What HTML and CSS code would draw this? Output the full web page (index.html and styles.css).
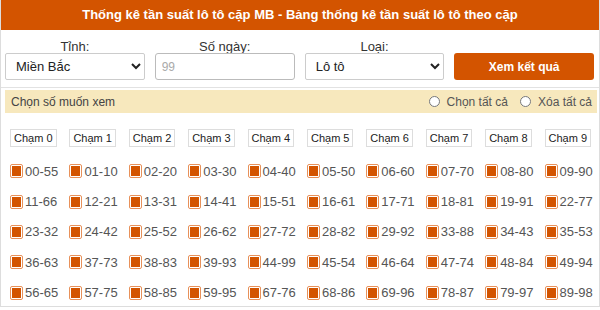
FILE: index.html
```html
<!DOCTYPE html>
<html lang="vi">
<head>
    <meta charset="UTF-8">
    <title>Thống kê tần suất lô tô cặp MB</title>
    <link rel="stylesheet" href="styles.css">
</head>
<body>
    <div class="box">
        <h2 class="box-title">Thống kê tần suất lô tô cặp MB - Bảng thống kê tần suất lô tô theo cặp</h2>
        <form class="filter">
            <div class="field">
                <label for="province">Tỉnh:</label>
                <select id="province"><option>Miền Bắc</option></select>
            </div>
            <div class="field">
                <label for="days">Số ngày:</label>
                <input type="number" id="days" placeholder="99">
            </div>
            <div class="field">
                <label for="type">Loại:</label>
                <select id="type"><option>Lô tô</option></select>
            </div>
            <div class="field">
                <label>&nbsp;</label>
                <button type="button">Xem kết quả</button>
            </div>
        </form>
        <div class="pick">
            <div class="pick-head">
                <span>Chọn số muốn xem</span>
                <div class="pick-opts">
                    <label><input type="radio" name="all"> Chọn tất cả</label>
                    <label><input type="radio" name="all"> Xóa tất cả</label>
                </div>
            </div>
            <div class="grid" id="grid"></div>
        </div>
    </div>

    <script>
        const pairs = [
            ['00-55', '01-10', '02-20', '03-30', '04-40', '05-50', '06-60', '07-70', '08-80', '09-90'],
            ['11-66', '12-21', '13-31', '14-41', '15-51', '16-61', '17-71', '18-81', '19-91', '22-77'],
            ['23-32', '24-42', '25-52', '26-62', '27-72', '28-82', '29-92', '33-88', '34-43', '35-53'],
            ['36-63', '37-73', '38-83', '39-93', '44-99', '45-54', '46-64', '47-74', '48-84', '49-94'],
            ['56-65', '57-75', '58-85', '59-95', '67-76', '68-86', '69-96', '78-87', '79-97', '89-98']
        ];
        let html = '';
        for (let i = 0; i < 10; i++) {
            html += `<div class="cell"><span class="cham">Chạm ${i}</span></div>`;
        }
        pairs.forEach(function(row) {
            row.forEach(function(p) {
                html += `<div class="cell"><label class="pair"><span class="check"></span>${p}</label></div>`;
            });
        });
        document.getElementById('grid').innerHTML = html;
    </script>
</body>
</html>
```

FILE: styles.css
```css
body {
    margin: 0;
    font-family: "Liberation Sans", Arial, sans-serif;
    color: #333;
    background: #fff;
}
.box {
    width: 598px;
    height: 306px;
    border: 1px solid #ddd;
    border-top: none;
}
.box-title {
    margin: 0;
    height: 30px;
    line-height: 30px;
    background: #d35400;
    color: #fff;
    font-size: 13px;
    font-weight: bold;
    text-align: center;
}
.filter {
    display: flex;
    gap: 10px;
    padding: 7px 5px 7px 4px;
    border-bottom: 1px solid #e2e2e2;
}
.field {
    display: flex;
    flex-direction: column;
    width: 140px;
}
.field label {
    text-align: center;
    font-size: 13px;
    color: #333;
    height: 16px;
    line-height: 19px;
}
.field select,
.field input,
.field button {
    height: 27px;
    box-sizing: border-box;
    font-family: "Liberation Sans", Arial, sans-serif;
}
.field select {
    font-size: 13px;
    color: #222;
    padding: 0 6px;
    border: 1px solid #ccc;
    border-radius: 2px;
    background: #fff;
}
.field input {
    font-size: 12px;
    padding: 0 6px;
    border: 1px solid #bbb;
    border-radius: 3px;
}
.field input::placeholder {
    color: #aaa;
}
.field button {
    font-size: 12px;
    font-weight: bold;
    color: #fff;
    background: #d35400;
    border: none;
    border-radius: 3px;
}
.pick {
    padding: 2px 2px 0 4px;
}
.pick-head {
    display: flex;
    justify-content: space-between;
    align-items: center;
    height: 23px;
    padding: 0 5px 0 6px;
    background: #f7e8bd;
    border-bottom: 1px solid #fff;
    font-size: 12px;
    color: #444;
}
.pick-opts {
    display: flex;
    gap: 12px;
}
.pick-opts label {
    display: flex;
    align-items: center;
    color: #555;
}
.pick-opts input {
    margin: 0 7px 0 0;
    width: 11px;
    height: 11px;
}
.grid {
    display: grid;
    grid-template-columns: repeat(10, 59.4px);
    grid-template-rows: 37px repeat(5, 30.4px);
    padding-top: 5px;
}
.cell {
    display: flex;
    align-items: center;
    padding-left: 5px;
}
.cham {
    font-size: 11px;
    color: #222;
    padding: 2px 3px;
    border: 1px solid #ddd;
}
.pair {
    display: flex;
    align-items: center;
    font-size: 13px;
    color: #555;
}
.check {
    width: 9px;
    height: 10px;
    margin-right: 2px;
    padding: 1px;
    background: #d35400;
    background-clip: content-box;
    border: 1px solid #e8915a;
    border-radius: 2px;
}
```
